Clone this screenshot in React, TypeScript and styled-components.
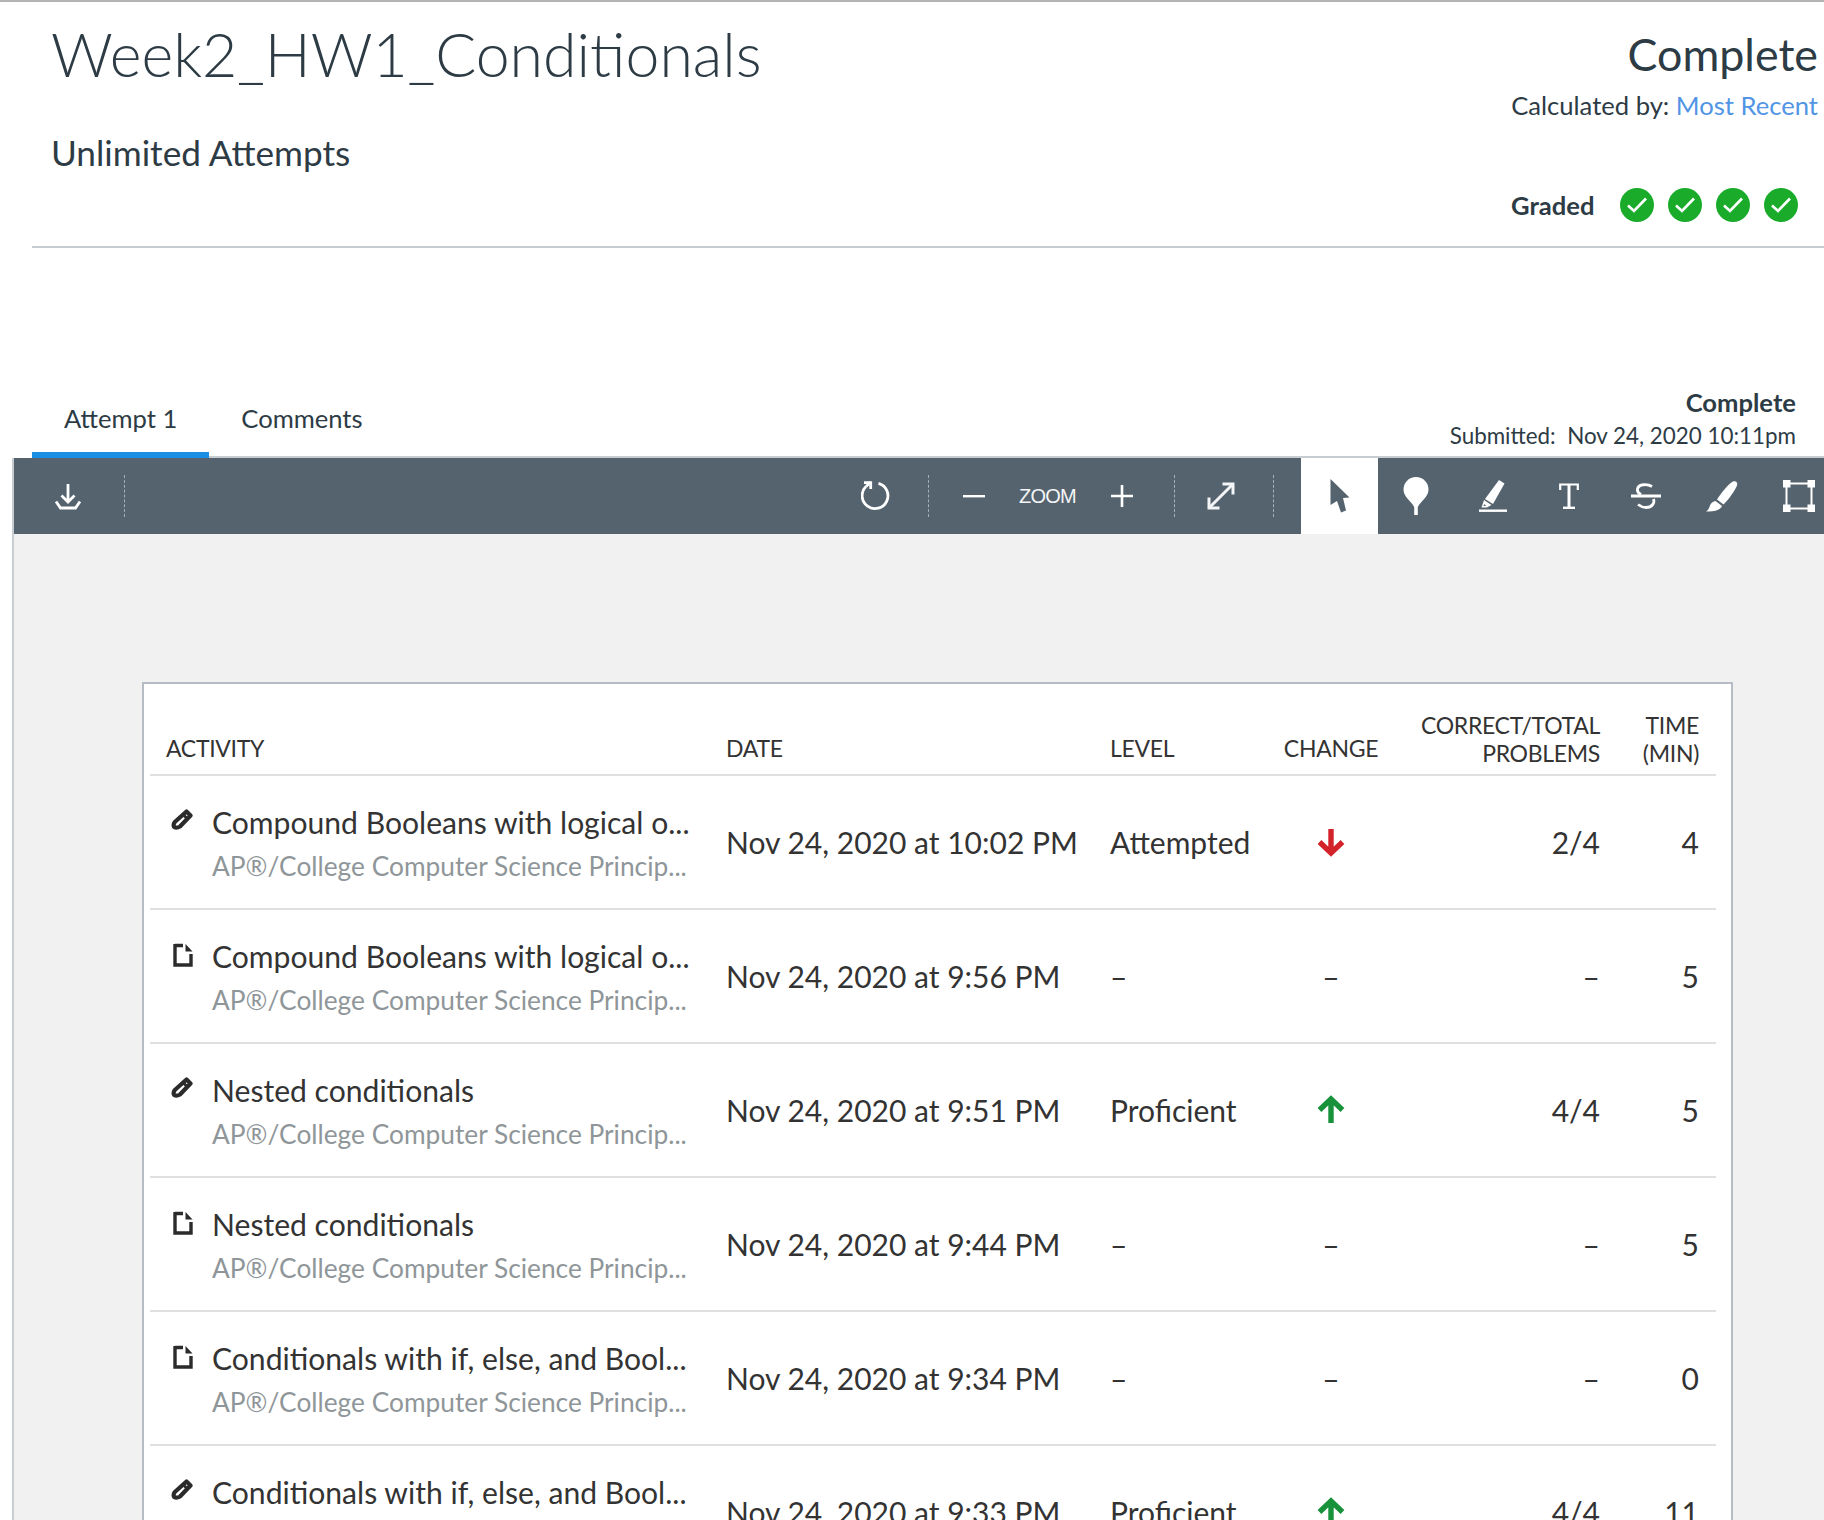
import styled, { createGlobalStyle } from 'styled-components';

const GlobalStyle = createGlobalStyle`
  html, body {
    margin: 0;
    padding: 0;
    background: #fff;
    height: 1520px;
    overflow: hidden;
  }
  body {
    font-family: 'Lato', 'Liberation Sans', sans-serif;
    color: #2d3b45;
  }
`;

type Row = {
  kind: 'pencil' | 'doc';
  title: string;
  date: string;
  level: string;
  change: 'up' | 'down' | 'none';
  score: string;
  time: string;
};

const rows: Row[] = [
  { kind: 'pencil', title: 'Compound Booleans with logical o...', date: 'Nov 24, 2020 at 10:02 PM', level: 'Attempted', change: 'down', score: '2/4', time: '4' },
  { kind: 'doc', title: 'Compound Booleans with logical o...', date: 'Nov 24, 2020 at 9:56 PM', level: '–', change: 'none', score: '–', time: '5' },
  { kind: 'pencil', title: 'Nested conditionals', date: 'Nov 24, 2020 at 9:51 PM', level: 'Proficient', change: 'up', score: '4/4', time: '5' },
  { kind: 'doc', title: 'Nested conditionals', date: 'Nov 24, 2020 at 9:44 PM', level: '–', change: 'none', score: '–', time: '5' },
  { kind: 'doc', title: 'Conditionals with if, else, and Bool...', date: 'Nov 24, 2020 at 9:34 PM', level: '–', change: 'none', score: '–', time: '0' },
  { kind: 'pencil', title: 'Conditionals with if, else, and Bool...', date: 'Nov 24, 2020 at 9:33 PM', level: 'Proficient', change: 'up', score: '4/4', time: '11' },
];

function Check() {
  return (
    <CheckCircle>
      <svg width="20" height="16" viewBox="0 0 20 16" fill="none">
        <path d="M1 8.5 L7 14 L19 1.5" stroke="#fff" strokeWidth="2.6" />
      </svg>
    </CheckCircle>
  );
}

function PencilIcon() {
  return (
    <svg width="22" height="22" viewBox="0 0 22 22" fill="none">
      <path d="M15.5 2.5 L19.5 6.5 L9 17.5 Q5.5 19.5 3.2 18 Q1.8 16 3.8 13 Z" stroke="#2b2b2b" strokeWidth="4.2" strokeLinejoin="round" />
      <path d="M12 5.5 L16.5 10" stroke="#2b2b2b" strokeWidth="3" />
    </svg>
  );
}

function DocIcon() {
  return (
    <svg width="20" height="24" viewBox="0 0 20 24" fill="none">
      <path d="M2 2.5 H10 M2 1 V22 H18 V11" stroke="#2b2b2b" strokeWidth="3.4" />
      <path d="M12.5 1 L19.5 8.5 H12.5 Z" fill="#2b2b2b" />
    </svg>
  );
}

function ChangeArrow({ up }: { up: boolean }) {
  return (
    <svg width="30" height="30" viewBox="0 0 30 30" fill="none" style={{ transform: up ? 'rotate(180deg)' : undefined }}>
      <path d="M15 2 V25 M3.5 15 L15 26 L26.5 15" stroke={up ? '#17913a' : '#d3222a'} strokeWidth="5.4" />
    </svg>
  );
}

export default function App() {
  return (
    <Page>
      <GlobalStyle />
      <Header>
        <HeaderLeft>
          <Title>Week2_HW1_Conditionals</Title>
          <Attempts>Unlimited Attempts</Attempts>
        </HeaderLeft>
        <HeaderRight>
          <Grade>Complete</Grade>
          <Calc>
            Calculated by: <a>Most Recent</a>
          </Calc>
          <GradedRow>
            <strong>Graded</strong>
            <Checks>
              <Check />
              <Check />
              <Check />
              <Check />
            </Checks>
          </GradedRow>
        </HeaderRight>
      </Header>
      <Divider />

      <TabsBar>
        <Tabs>
          <Tab $active>Attempt 1</Tab>
          <Tab>Comments</Tab>
        </Tabs>
        <Submitted>
          <strong>Complete</strong>
          <span>Submitted:&nbsp; Nov 24, 2020 10:11pm</span>
        </Submitted>
      </TabsBar>

      <Viewer>
        <Toolbar>
          <DownloadBtn>
            <svg width="28" height="27" viewBox="0 0 28 27" fill="none" stroke="#fff" strokeWidth="2.8">
              <path d="M14 1 V19 M7.5 12.5 L14 19 L20.5 12.5" />
              <path d="M2 18.5 L6.5 25 H21.5 L26 18.5" />
            </svg>
          </DownloadBtn>
          <ToolSep />
          <ToolGap $w={698} />
          <ToolBtn $w={105}>
            <svg width="30" height="32" viewBox="0 0 30 32" fill="none" stroke="#fff" strokeWidth="2.8">
              <path d="M5 6.5 A12.9 12.9 0 1 0 17.5 3.3" />
              <path d="M5 6.5 L9.7 2.3" />
              <path d="M3 2.6 H9.7 V9" />
            </svg>
          </ToolBtn>
          <ToolSep />
          <ToolBtn $w={90}>
            <svg width="22" height="4" viewBox="0 0 22 4">
              <rect width="22" height="2.4" y="1" fill="#fff" />
            </svg>
          </ToolBtn>
          <ZoomLabel>ZOOM</ZoomLabel>
          <ToolBtn $w={92}>
            <svg width="22" height="22" viewBox="0 0 22 22">
              <path d="M0 11 H22 M11 0 V22" stroke="#fff" strokeWidth="2.6" />
            </svg>
          </ToolBtn>
          <ToolGap $w={6} />
          <ToolSep />
          <ToolBtn $w={92}>
            <svg width="28" height="28" viewBox="0 0 28 28" fill="none" stroke="#f4f5f6" strokeWidth="3">
              <path d="M3 25 L25 3" />
              <path d="M15.5 2 H26 V12.5" />
              <path d="M2 15.5 V26 H12.5" />
            </svg>
          </ToolBtn>
          <ToolGap $w={6} />
          <ToolSep />
          <ToolGap $w={27} />
          <ActiveTool>
            <svg width="20" height="34" viewBox="0 0 20 34">
              <path d="M0.5 0 L19.5 18.5 L13 19 L16 31.5 L11 33.5 L7 22 L0.5 26 Z" fill="#55636f" />
            </svg>
          </ActiveTool>
          <ToolBtn $w={76.5}>
            <svg width="26" height="38" viewBox="0 0 26 38">
              <path d="M13 0 C20 0 25.5 5.5 25.5 12.5 C25.5 20 18 24 14.8 30 L14.8 38 H11.2 V30 C8 24 0.5 20 0.5 12.5 C0.5 5.5 6 0 13 0 Z" fill="#fff" />
            </svg>
          </ToolBtn>
          <ToolBtn $w={76.5}>
            <svg width="28" height="32" viewBox="0 0 28 32" fill="#fff">
              <path d="M20 0 L25.5 3.5 L14 24 L6 19 Z" />
              <path fillRule="evenodd" d="M5 20 L12.5 25 L8 27.5 H2.5 Z M5.5 24 L4.5 26 H7 Z" />
              <rect x="0" y="29.5" width="28" height="2.4" />
            </svg>
          </ToolBtn>
          <ToolBtn $w={76.5}>
            <svg width="20" height="26" viewBox="0 0 20 26" fill="none" stroke="#fff">
              <path d="M1.2 7 V1.5 H18.8 V7" strokeWidth="2.2" />
              <path d="M10 1 V25" strokeWidth="3" />
              <path d="M4 24.8 H16" strokeWidth="2.4" />
            </svg>
          </ToolBtn>
          <ToolBtn $w={76.5}>
            <svg width="30" height="26" viewBox="0 0 30 26" fill="none" stroke="#fff" strokeWidth="2.8">
              <path d="M21 3.5 C17 1 7.5 0.5 6.5 6 C6 9 8 10.5 10 11.5" />
              <path d="M0 13 H30" strokeWidth="3" />
              <path d="M22.5 16 C24 20 21 24.5 15 24.5 C11.5 24.5 9 23 7 21.5" />
            </svg>
          </ToolBtn>
          <ToolBtn $w={76.5}>
            <svg width="32" height="31" viewBox="0 0 32 31" fill="#fff">
              <path d="M27 0.5 C30 -0.5 32 1.5 31 4.5 C29 9.5 23 18 17.5 23.5 L11 18.5 C15 12.5 22 3 27 0.5 Z" />
              <path d="M9.5 20 L16 25 C14.5 29 8 31 0 30.5 C2.5 29 3 27 4 24.5 C5 22 7 20.5 9.5 20 Z" />
            </svg>
          </ToolBtn>
          <ToolBtn $w={76.5}>
            <svg width="32" height="32" viewBox="0 0 32 32" fill="none">
              <rect x="3.5" y="3.5" width="25" height="25" stroke="#fff" strokeWidth="2" />
              <rect x="0" y="0" width="7.5" height="7.5" fill="#fff" />
              <rect x="24.5" y="0" width="7.5" height="7.5" fill="#fff" />
              <rect x="0" y="24.5" width="7.5" height="7.5" fill="#fff" />
              <rect x="24.5" y="24.5" width="7.5" height="7.5" fill="#fff" />
            </svg>
          </ToolBtn>
        </Toolbar>

        <Canvas>
          <Card>
            <ReportRowHead>
              <HeadCell $lift>ACTIVITY</HeadCell>
              <HeadCell $lift>DATE</HeadCell>
              <HeadCell $lift>LEVEL</HeadCell>
              <HeadCell $lift $center>CHANGE</HeadCell>
              <HeadCell $right>
                CORRECT/TOTAL
                <br />
                PROBLEMS
              </HeadCell>
              <HeadCell $right>
                TIME
                <br />
                (MIN)
              </HeadCell>
            </ReportRowHead>
            {rows.map((r, i) => (
              <ReportRow key={i}>
                <Activity>
                  <KindIcon $doc={r.kind === 'doc'}>{r.kind === 'pencil' ? <PencilIcon /> : <DocIcon />}</KindIcon>
                  <div>
                    <ActivityTitle>{r.title}</ActivityTitle>
                    <ActivitySub>AP®/College Computer Science Princip...</ActivitySub>
                  </div>
                </Activity>
                <Cell>{r.date}</Cell>
                <Cell>{r.level}</Cell>
                <Cell $center>{r.change === 'none' ? '–' : <ChangeArrow up={r.change === 'up'} />}</Cell>
                <Cell $right>{r.score}</Cell>
                <Cell $right>{r.time}</Cell>
              </ReportRow>
            ))}
          </Card>
        </Canvas>
      </Viewer>
    </Page>
  );
}

const Page = styled.div`
  width: 1824px;
  height: 1520px;
  overflow: hidden;
  border-top: 2px solid #b3b3b3;
  box-sizing: border-box;
`;

const Header = styled.header`
  display: flex;
  justify-content: space-between;
  height: 244px;
  padding: 0 6px 0 51px;
`;

const HeaderLeft = styled.div`
  padding-top: 15px;
`;

const Title = styled.h1`
  margin: 0;
  font-size: 60.8px;
  line-height: 74px;
  font-weight: 300;
`;

const Attempts = styled.div`
  margin-top: 39px;
  font-size: 35.2px;
  line-height: 44px;
`;

const HeaderRight = styled.div`
  display: flex;
  flex-direction: column;
  align-items: flex-end;
  padding-top: 25px;
`;

const Grade = styled.div`
  font-size: 44.8px;
  line-height: 54px;
`;

const Calc = styled.div`
  font-size: 25.6px;
  line-height: 32px;
  margin-top: 8px;
  a {
    color: #5295e5;
  }
`;

const GradedRow = styled.div`
  display: flex;
  align-items: center;
  width: 306px;
  margin: 67px 1px 0 0;
  strong {
    font-size: 25.6px;
    font-weight: 700;
    width: 109px;
  }
`;

const Checks = styled.div`
  display: flex;
  gap: 14px;
`;

const CheckCircle = styled.span`
  display: flex;
  align-items: center;
  justify-content: center;
  width: 34px;
  height: 34px;
  border-radius: 50%;
  background: #1aab2b;
`;

const Divider = styled.hr`
  margin: 0 0 0 32px;
  border: 0;
  height: 2px;
  background: #c7cdd1;
`;

const TabsBar = styled.div`
  display: flex;
  justify-content: space-between;
  align-items: flex-end;
  height: 210px;
  margin-left: 32px;
  padding-right: 28px;
  box-sizing: border-box;
  border-bottom: 2px solid #c7cdd1;
`;

const Tabs = styled.div`
  display: flex;
  margin-bottom: -2px;
`;

const Tab = styled.div<{ $active?: boolean }>`
  padding: 10px 32px 0;
  height: 66px;
  box-sizing: border-box;
  font-size: 25.6px;
  line-height: 32px;
  border-bottom: 6px solid ${(p) => (p.$active ? '#1a8fe3' : 'transparent')};
`;

const Submitted = styled.div`
  display: flex;
  flex-direction: column;
  align-items: flex-end;
  font-size: 22.4px;
  line-height: 30px;
  padding-bottom: 5px;
  strong {
    font-size: 25.6px;
    font-weight: 700;
    line-height: 34px;
    margin-bottom: 2px;
  }
`;

const Viewer = styled.div`
  margin-left: 12px;
  border-left: 2px solid #c7cdd1;
  height: 1064px;
  background: #f1f1f1;
  overflow: hidden;
`;

const Toolbar = styled.div`
  display: flex;
  align-items: center;
  height: 76px;
  width: 1824px;
  background: #55636f;
`;

const DownloadBtn = styled.div`
  display: flex;
  align-items: center;
  justify-content: center;
  width: 108px;
  padding-right: 2px;
  height: 100%;
`;

const ToolSep = styled.div`
  flex: none;
  height: 42px;
  border-left: 1px dashed #a7afb6;
`;

const ToolGap = styled.div<{ $w: number }>`
  flex: none;
  width: ${(p) => p.$w}px;
`;

const ToolBtn = styled.div<{ $w: number }>`
  display: flex;
  flex: none;
  align-items: center;
  justify-content: center;
  width: ${(p) => p.$w}px;
  height: 100%;
`;

const ActiveTool = styled.div`
  display: flex;
  flex: none;
  align-items: center;
  justify-content: center;
  width: 77px;
  height: 100%;
  background: #fff;
`;

const ZoomLabel = styled.div`
  flex: none;
  color: #f4f5f6;
  font-family: 'Liberation Sans', sans-serif;
  font-size: 20px;
  letter-spacing: -0.8px;
  width: 57px;
  text-align: center;
`;

const Canvas = styled.div`
  padding: 148px 0 0 128px;
`;

const Card = styled.div`
  width: 1591px;
  height: 1000px;
  box-sizing: border-box;
  background: #fff;
  border: 2px solid #b5bcc4;
  padding: 0 15px 0 6px;
`;

const columns = `
  display: grid;
  grid-template-columns: 576px 384px 160px 122px 208px 99px;
  box-sizing: border-box;
  padding-right: 17px;
  border-bottom: 2px solid #dfe0e1;
`;

const ReportRowHead = styled.div`
  ${columns}
  align-items: end;
  height: 92px;
  padding-bottom: 7px;
`;

const ReportRow = styled.div`
  ${columns}
  align-items: center;
  height: 134px;
`;

const HeadCell = styled.div<{ $center?: boolean; $right?: boolean; $lift?: boolean }>`
  font-size: 23px;
  line-height: 28px;
  color: #333;
  letter-spacing: -0.3px;
  white-space: nowrap;
  padding-bottom: ${(p) => (p.$lift ? '5px' : '0')};
  text-align: ${(p) => (p.$center ? 'center' : p.$right ? 'right' : 'left')};
  &:first-child {
    padding-left: 16px;
  }
`;

const Cell = styled.div<{ $center?: boolean; $right?: boolean }>`
  display: flex;
  justify-content: ${(p) => (p.$center ? 'center' : p.$right ? 'flex-end' : 'flex-start')};
  font-size: 30px;
  color: #333;
  white-space: nowrap;
`;

const Activity = styled.div`
  display: flex;
  padding-left: 20px;
  align-self: start;
  padding-top: 28px;
`;

const KindIcon = styled.div<{ $doc: boolean }>`
  box-sizing: border-box;
  width: 42px;
  padding: 5px 0 0 ${(p) => (p.$doc ? '3px' : '1px')};
`;

const ActivityTitle = styled.div`
  font-size: 30.1px;
  line-height: 36px;
  color: #333;
  white-space: nowrap;
`;

const ActivitySub = styled.div`
  margin-top: 9px;
  font-size: 26.3px;
  line-height: 34px;
  color: #8f9699;
  white-space: nowrap;
`;
